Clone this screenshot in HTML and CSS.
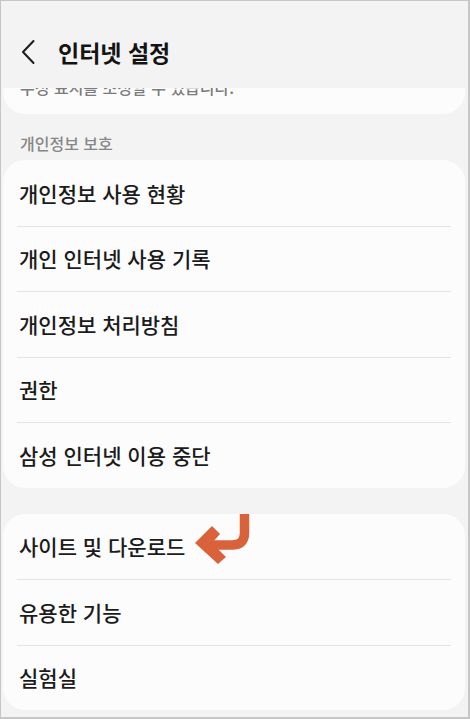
FILE: index.html
```html
<!DOCTYPE html>
<html lang="ko">
<head>
<meta charset="utf-8">
<title>인터넷 설정</title>
<link rel="stylesheet" href="styles.css">
</head>
<body>
<div class="frame">
  <header class="appbar">
    <svg class="back" width="16" height="26" viewBox="0 0 16 26" aria-hidden="true">
      <polyline points="12.5,2 2,13 12.5,24" fill="none" stroke="#1c1c1c" stroke-width="2" stroke-linecap="round" stroke-linejoin="round"/>
    </svg>
    <h1 class="title">인터넷 설정</h1>
  </header>

  <div class="card clipped">
    <p class="clipped-text">수정 표시를 조정할 수 있습니다.</p>
  </div>

  <div class="section-label">개인정보 보호</div>

  <div class="card">
    <div class="row">개인정보 사용 현황</div>
    <div class="row">개인 인터넷 사용 기록</div>
    <div class="row">개인정보 처리방침</div>
    <div class="row">권한</div>
    <div class="row">삼성 인터넷 이용 중단</div>
  </div>

  <div class="card second">
    <div class="row">사이트 및 다운로드
      <svg class="pointer" width="64" height="58" viewBox="0 0 64 58" aria-hidden="true">
        <path d="M52.5,1 L52.5,20 Q52.5,32 40,32 L20,32" fill="none" stroke="#d9623b" stroke-width="9.5"/>
        <polygon points="3,30 20,13 28,21 20,30 34,44 26,51" fill="#d9623b"/>
      </svg>
    </div>
    <div class="row">유용한 기능</div>
    <div class="row">실험실</div>
  </div>
</div>
</body>
</html>
```

FILE: styles.css
```css
* { box-sizing: border-box; }

html, body {
  margin: 0;
  padding: 0;
  background: #f3f3f3;
}

.frame {
  width: 470px;
  height: 719px;
  border-style: solid;
  border-color: #c6c6c6;
  border-width: 1px 2px 2px 1px;
  background: #f3f3f3;
  overflow: hidden;
  display: flex;
  flex-direction: column;
  font-family: "Noto Sans CJK KR", "Noto Sans", sans-serif;
  color: #1b1b1b;
}

.appbar {
  height: 87px;
  flex: none;
  padding: 14px 0 0 20px;
  display: flex;
  align-items: center;
  gap: 21px;
}

.back { display: block; flex: none; }

.title {
  margin: 0;
  font-size: 23px;
  font-weight: 700;
  color: #141414;
  line-height: 30px;
}

.card {
  margin: 0 3px 0 2px;
  background: #fcfcfc;
  border-radius: 22px;
  flex: none;
}

.clipped {
  height: 26px;
  border-radius: 0 0 22px 22px;
  overflow: hidden;
}

.clipped-text {
  margin: -11px 0 0 17px;
  font-size: 16px;
  line-height: 20px;
  font-weight: 500;
  color: #7c7c7c;
}

.section-label {
  margin: 19px 0 7px 19px;
  font-size: 16px;
  line-height: 20px;
  font-weight: 500;
  color: #878787;
}

.second { margin-top: 26px; }

.row {
  position: relative;
  height: 65.5px;
  padding-left: 16px;
  display: flex;
  align-items: center;
  font-size: 21px;
  font-weight: 500;
  color: #1b1b1b;
}

.row + .row::before {
  content: "";
  position: absolute;
  top: 0;
  left: 14px;
  right: 14px;
  height: 1px;
  background: #e4e4e4;
}

.pointer {
  position: absolute;
  left: 189px;
  top: -1px;
}
```
